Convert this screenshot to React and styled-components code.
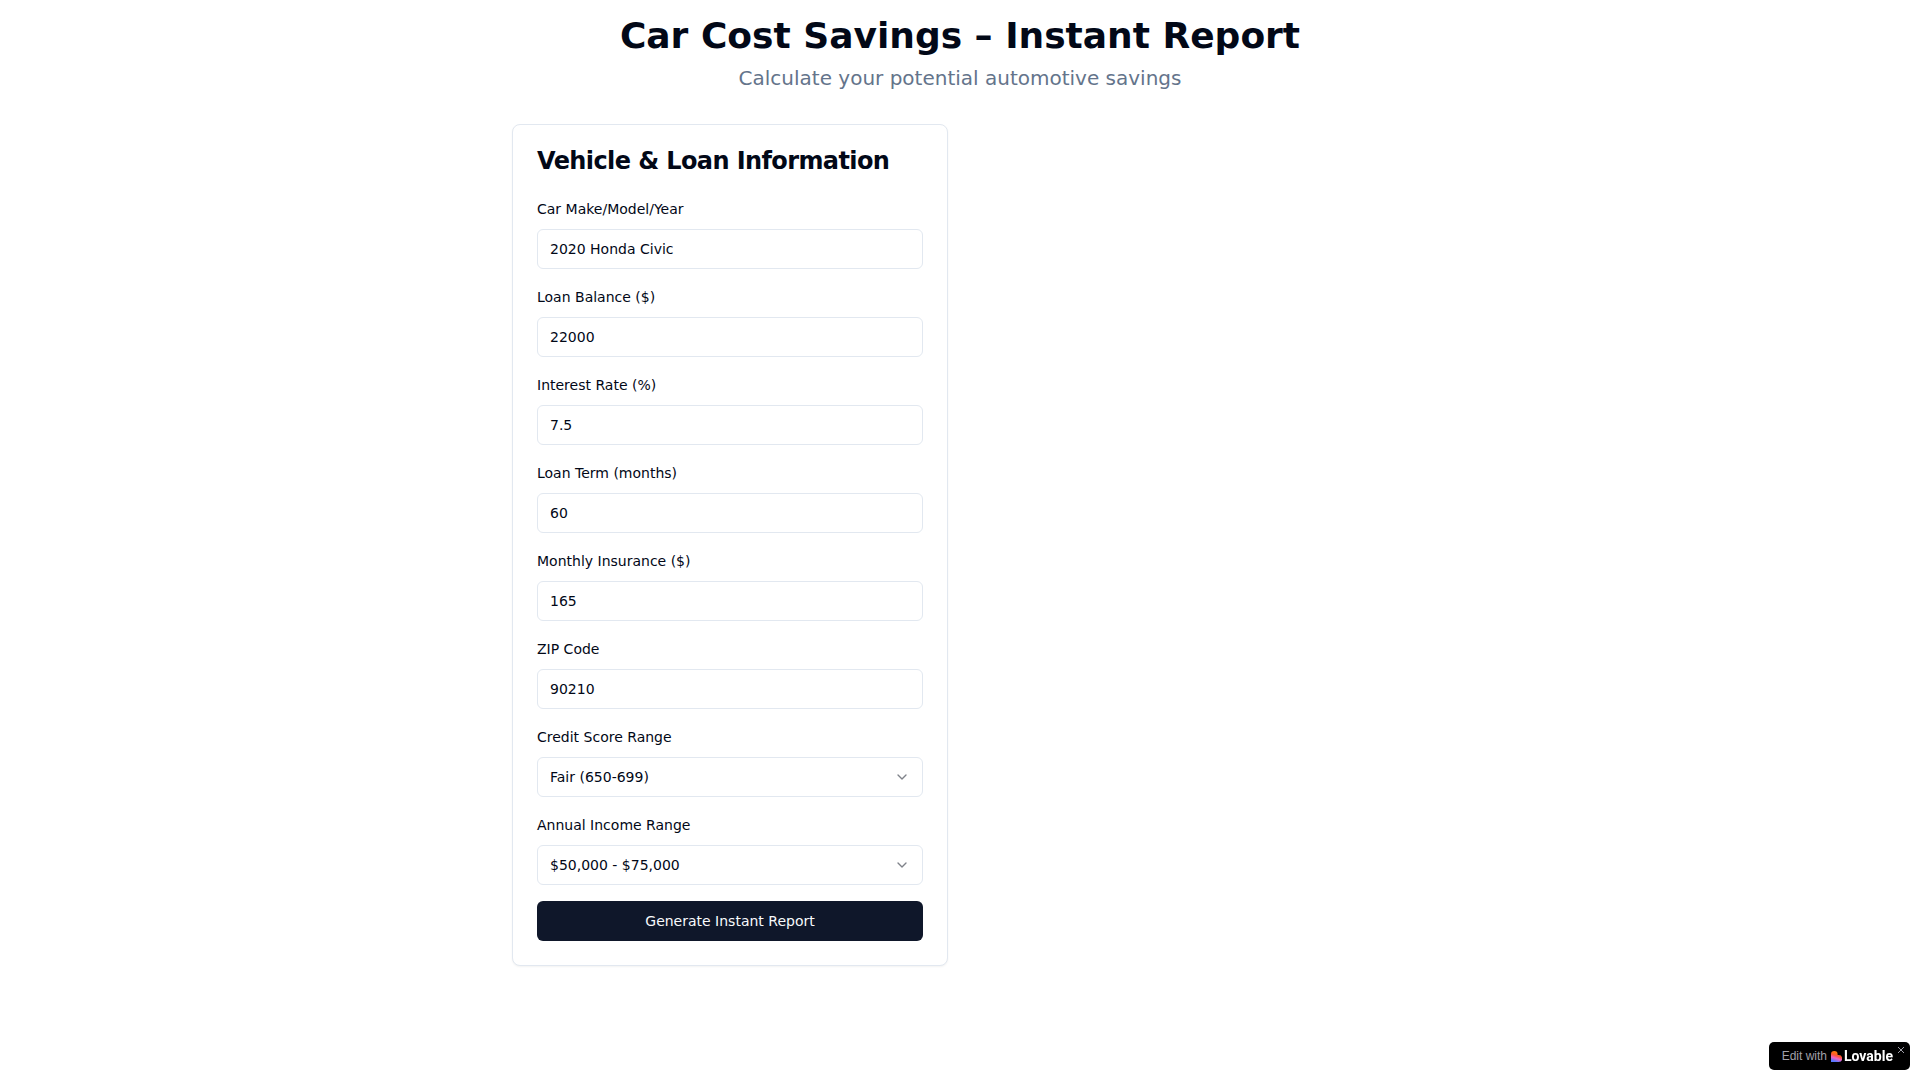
import React from "react";
import styled, { createGlobalStyle } from "styled-components";
import { ChevronDown } from "lucide-react";

const GlobalStyle = createGlobalStyle`
  *, *::before, *::after { box-sizing: border-box; }
  body {
    margin: 0;
    background: #ffffff;
    color: #020817;
    font-family: "DejaVu Sans", "Noto Sans", sans-serif;
    font-size: 16px;
    line-height: 24px;
  }
`;

const Page = styled.main`
  max-width: 928px;
  margin: 0 auto;
  padding: 16px;
`;

const Header = styled.header`
  display: flex;
  flex-direction: column;
  gap: 8px;
  margin-bottom: 32px;
  text-align: center;
`;

const Title = styled.h1`
  margin: 0;
  font-size: 36px;
  line-height: 40px;
  font-weight: 700;
`;

const Subtitle = styled.p`
  margin: 0;
  font-size: 20px;
  line-height: 28px;
  color: #64748b;
`;

const Columns = styled.div`
  display: grid;
  grid-template-columns: repeat(2, minmax(0, 1fr));
  gap: 24px;

  @media (max-width: 767px) {
    grid-template-columns: minmax(0, 1fr);
  }
`;

const Card = styled.section`
  display: flex;
  flex-direction: column;
  gap: 24px;
  padding: 24px;
  border: 1px solid #e2e8f0;
  border-radius: 8px;
  background: #ffffff;
  box-shadow: 0 1px 2px rgba(0, 0, 0, 0.05);
`;

const CardTitle = styled.h2`
  margin: 0;
  font-size: 24px;
  line-height: 24px;
  font-weight: 600;
  letter-spacing: -0.025em;
`;

const Form = styled.form`
  display: flex;
  flex-direction: column;
  gap: 16px;
`;

const Field = styled.div`
  display: flex;
  flex-direction: column;
  gap: 8px;
`;

const Label = styled.label`
  font-size: 14px;
  line-height: 24px;
  font-weight: 500;
`;

const Input = styled.input`
  width: 100%;
  height: 40px;
  padding: 8px 12px;
  border: 1px solid #e2e8f0;
  border-radius: 6px;
  background: #ffffff;
  color: inherit;
  font: inherit;
  font-size: 14px;
  line-height: 20px;
`;

const SelectWrap = styled.div`
  position: relative;

  svg {
    position: absolute;
    top: 12px;
    right: 13px;
    opacity: 0.5;
    pointer-events: none;
  }
`;

const Select = styled(Input)`
  display: block;
  appearance: none;
`;

const SubmitButton = styled.button`
  height: 40px;
  padding: 8px 16px;
  border: 0;
  border-radius: 6px;
  background: #0f172a;
  color: #f8fafc;
  font: inherit;
  font-size: 14px;
  line-height: 20px;
  font-weight: 500;
  cursor: pointer;
`;

const Badge = styled.aside`
  position: fixed;
  right: 10px;
  bottom: 10px;
  display: flex;
  height: 28px;
  border-radius: 5px;
  background: #000000;
  font-family: "Liberation Sans", Arial, sans-serif;
`;

const BadgeLink = styled.a`
  display: flex;
  align-items: center;
  gap: 4px;
  padding-left: 13px;
  color: #a1a1aa;
  font-size: 12px;
  text-decoration: none;
`;

const Brand = styled.span`
  display: flex;
  align-items: center;
  gap: 2px;
  color: #ffffff;
  font-family: Roboto, sans-serif;
  font-size: 14px;
  font-weight: 700;
`;

const BadgeClose = styled.button`
  display: flex;
  align-self: flex-start;
  padding: 4px 5px 4px 4px;
  border: 0;
  background: none;
  color: #a1a1aa;
  cursor: pointer;
`;

const fields = [
  { id: "car", label: "Car Make/Model/Year", value: "2020 Honda Civic" },
  { id: "balance", label: "Loan Balance ($)", value: "22000" },
  { id: "rate", label: "Interest Rate (%)", value: "7.5" },
  { id: "term", label: "Loan Term (months)", value: "60" },
  { id: "insurance", label: "Monthly Insurance ($)", value: "165" },
  { id: "zip", label: "ZIP Code", value: "90210" },
];

const selects = [
  { id: "credit", label: "Credit Score Range", value: "Fair (650-699)" },
  { id: "income", label: "Annual Income Range", value: "$50,000 - $75,000" },
];

function HeartMark() {
  return (
    <svg width="11" height="11" viewBox="0 0 20 20" aria-hidden="true">
      <defs>
        <linearGradient id="heart" x1="0.7" y1="0.1" x2="0.4" y2="1">
          <stop offset="0.15" stopColor="#ff7410" />
          <stop offset="0.4" stopColor="#ff5638" />
          <stop offset="0.65" stopColor="#f263c4" />
          <stop offset="0.95" stopColor="#5a78ff" />
        </linearGradient>
      </defs>
      <path
        fill="url(#heart)"
        d="M6 0a6 6 0 0 1 6 6v1.4h2a6.2 6.2 0 0 1 0 12.6H0V6a6 6 0 0 1 6-6z"
      />
    </svg>
  );
}

export default function App() {
  return (
    <>
      <GlobalStyle />
      <Page>
        <Header>
          <Title>Car Cost Savings – Instant Report</Title>
          <Subtitle>Calculate your potential automotive savings</Subtitle>
        </Header>
        <Columns>
          <Card>
            <CardTitle>Vehicle &amp; Loan Information</CardTitle>
            <Form onSubmit={(event) => event.preventDefault()}>
              {fields.map(({ id, label, value }) => (
                <Field key={id}>
                  <Label htmlFor={id}>{label}</Label>
                  <Input id={id} defaultValue={value} />
                </Field>
              ))}
              {selects.map(({ id, label, value }) => (
                <Field key={id}>
                  <Label htmlFor={id}>{label}</Label>
                  <SelectWrap>
                    <Select as="select" id={id} defaultValue={value}>
                      <option>{value}</option>
                    </Select>
                    <ChevronDown size={16} aria-hidden="true" />
                  </SelectWrap>
                </Field>
              ))}
              <SubmitButton type="submit">Generate Instant Report</SubmitButton>
            </Form>
          </Card>
        </Columns>
      </Page>
      <Badge>
        <BadgeLink href="#edit">
          Edit with
          <Brand>
            <HeartMark />
            Lovable
          </Brand>
        </BadgeLink>
        <BadgeClose type="button" aria-label="Close">
          <svg width="8" height="8" viewBox="0 0 8 8" stroke="currentColor" aria-hidden="true">
            <path d="M1 1l6 6M7 1L1 7" />
          </svg>
        </BadgeClose>
      </Badge>
    </>
  );
}
